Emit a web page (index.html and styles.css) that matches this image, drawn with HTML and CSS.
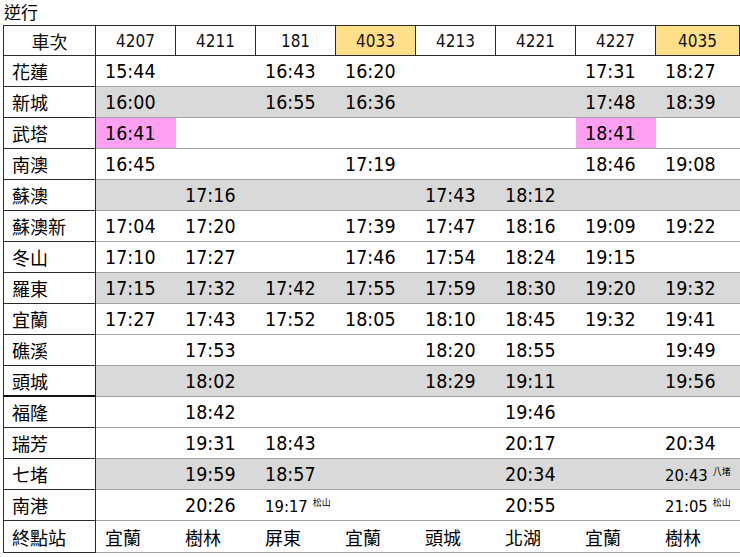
FILE: index.html
```html
<!DOCTYPE html>
<html lang="zh-Hant">
<head>
<meta charset="utf-8">
<title>逆行</title>
<link rel="stylesheet" href="styles.css">
</head>
<body>
<div class="page">
  <div class="title">逆行</div>
  <table class="tt">
    <colgroup>
      <col class="c-st"><col class="c-tr"><col class="c-tr"><col class="c-tr"><col class="c-tr"><col class="c-tr"><col class="c-tr"><col class="c-tr"><col class="c-last">
    </colgroup>
    <thead>
      <tr>
        <th class="st">車次</th>
        <th>4207</th><th>4211</th><th>181</th><th class="gold">4033</th><th>4213</th><th>4221</th><th>4227</th><th class="gold">4035</th>
      </tr>
    </thead>
    <tbody>
      <tr><td class="st">花蓮</td><td>15:44</td><td></td><td>16:43</td><td>16:20</td><td></td><td></td><td>17:31</td><td>18:27</td></tr>
      <tr class="grey"><td class="st">新城</td><td>16:00</td><td></td><td>16:55</td><td>16:36</td><td></td><td></td><td>17:48</td><td>18:39</td></tr>
      <tr><td class="st">武塔</td><td class="pink">16:41</td><td></td><td></td><td></td><td></td><td></td><td class="pink">18:41</td><td></td></tr>
      <tr><td class="st">南澳</td><td>16:45</td><td></td><td></td><td>17:19</td><td></td><td></td><td>18:46</td><td>19:08</td></tr>
      <tr class="grey"><td class="st">蘇澳</td><td></td><td>17:16</td><td></td><td></td><td>17:43</td><td>18:12</td><td></td><td></td></tr>
      <tr><td class="st">蘇澳新</td><td>17:04</td><td>17:20</td><td></td><td>17:39</td><td>17:47</td><td>18:16</td><td>19:09</td><td>19:22</td></tr>
      <tr><td class="st">冬山</td><td>17:10</td><td>17:27</td><td></td><td>17:46</td><td>17:54</td><td>18:24</td><td>19:15</td><td></td></tr>
      <tr class="grey"><td class="st">羅東</td><td>17:15</td><td>17:32</td><td>17:42</td><td>17:55</td><td>17:59</td><td>18:30</td><td>19:20</td><td>19:32</td></tr>
      <tr><td class="st">宜蘭</td><td>17:27</td><td>17:43</td><td>17:52</td><td>18:05</td><td>18:10</td><td>18:45</td><td>19:32</td><td>19:41</td></tr>
      <tr><td class="st">礁溪</td><td></td><td>17:53</td><td></td><td></td><td>18:20</td><td>18:55</td><td></td><td>19:49</td></tr>
      <tr class="grey thick"><td class="st">頭城</td><td></td><td>18:02</td><td></td><td></td><td>18:29</td><td>19:11</td><td></td><td>19:56</td></tr>
      <tr><td class="st">福隆</td><td></td><td>18:42</td><td></td><td></td><td></td><td>19:46</td><td></td><td></td></tr>
      <tr><td class="st">瑞芳</td><td></td><td>19:31</td><td>18:43</td><td></td><td></td><td>20:17</td><td></td><td>20:34</td></tr>
      <tr class="grey"><td class="st">七堵</td><td></td><td>19:59</td><td>18:57</td><td></td><td></td><td>20:34</td><td></td><td><span class="sm">20:43</span><span class="note">八堵</span></td></tr>
      <tr><td class="st">南港</td><td></td><td>20:26</td><td><span class="sm">19:17</span><span class="note">松山</span></td><td></td><td></td><td>20:55</td><td></td><td><span class="sm">21:05</span><span class="note">松山</span></td></tr>
      <tr class="end"><td class="st">終點站</td><td>宜蘭</td><td>樹林</td><td>屏東</td><td>宜蘭</td><td>頭城</td><td>北湖</td><td>宜蘭</td><td>樹林</td></tr>
    </tbody>
  </table>
</div>
</body>
</html>
```

FILE: styles.css
```css
html, body {
  margin: 0;
  padding: 0;
  background: #ffffff;
}

.page {
  padding: 0 0 0 3px;
  width: 737px;
  color: #000;
  font-family: "Noto Sans CJK TC", "Noto Sans CJK SC", sans-serif;
}

.title {
  height: 25px;
  font-size: 17px;
  line-height: 23px;
  padding-left: 1px;
}

.tt {
  border-collapse: separate;
  border-spacing: 0;
  table-layout: fixed;
  width: 737px;
}

.c-st { width: 93px; }
.c-tr { width: 80px; }
.c-last { width: 84px; }

.tt th,
.tt td {
  padding: 0;
  overflow: hidden;
  white-space: nowrap;
}

.tt th {
  height: 29px;
  border-top: 1px solid #2b2b2b;
  border-right: 1px solid #2b2b2b;
  border-bottom: 1px solid #2b2b2b;
  font-family: "DejaVu Sans Condensed", "DejaVu Sans", sans-serif;
  font-weight: normal;
  font-size: 17px;
  text-align: center;
  color: #111;
}

.tt th.st {
  border-left: 1px solid #2b2b2b;
  font-family: "Noto Sans CJK TC", sans-serif;
  font-size: 18px;
}

.tt th.gold {
  background: #ffdf8a;
}

.tt td {
  height: 30px;
  border-bottom: 1px solid #a3a3a3;
  padding-left: 9px;
  font-family: "DejaVu Sans Condensed", "DejaVu Sans", sans-serif;
  font-size: 19.5px;
  text-align: left;
}

.tt td.st {
  border-left: 1px solid #2b2b2b;
  border-right: 1px solid #2b2b2b;
  border-bottom-color: #2b2b2b;
  padding-left: 8px;
  font-family: "Noto Sans CJK TC", sans-serif;
  font-size: 18px;
  background: #fff;
}

.tt tr.grey td {
  background: #d9d9d9;
}

.tt tr.grey td.st {
  background: #fff;
}

.tt td.pink {
  background: #ffa0f3;
}

.tt tr.thick td.st {
  border-bottom: 2px solid #111;
  height: 29px;
}

.tt tr.end td {
  height: 31px;
  font-family: "Noto Sans CJK TC", sans-serif;
  font-size: 18px;
}

.sm {
  font-size: 16.5px;
}

.note {
  font-family: "Noto Sans CJK TC", sans-serif;
  font-size: 9px;
  margin-left: 5px;
  vertical-align: 6px;
}
```
